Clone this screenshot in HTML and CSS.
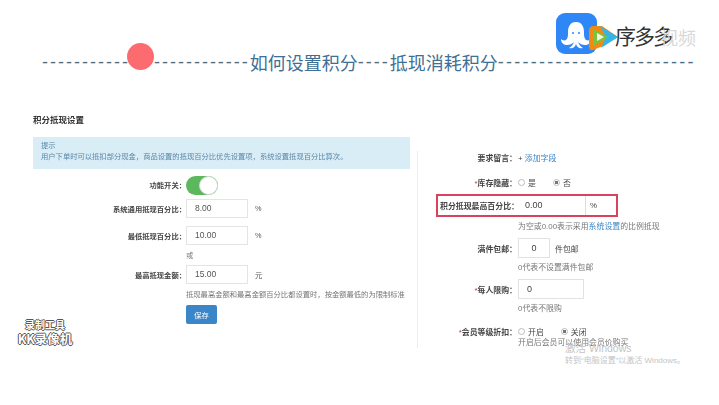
FILE: index.html
```html
<!DOCTYPE html>
<html lang="zh-CN">
<head>
<meta charset="utf-8">
<title>如何设置积分</title>
<link rel="stylesheet" href="styles.css">
</head>
<body>
<div class="slide">
  <h1 class="title"><span class="dash">--------------------------</span><span>如何设置积分</span><span class="dash">----</span><span>抵现消耗积分</span><span class="dash dash-end">------------------------</span></h1>
  <div class="dot"></div>

  <div class="logo">
    <svg class="logo-icon" width="66" height="44" viewBox="0 0 66 44">
      <rect x="0" y="0" width="41" height="41" rx="9" fill="#2f86f6"/>
      <path d="M20 9c-6 0-8 5-8 10 0 4 0 6-2 8-2 1-4 0-5-1 0 4 3 6 6 6 3 0 5-1 7-3-1 3-3 5-5 6 4 1 6-1 7-4 1 3 3 5 7 4-2-1-4-3-5-6 2 2 4 3 7 3 3 0 6-2 6-6-1 1-3 2-5 1-2-2-2-4-2-8 0-5-2-10-8-10z" fill="#fff"/>
      <circle cx="17" cy="20" r="1" fill="#2f86f6"/><circle cx="23" cy="20" r="1" fill="#2f86f6"/>
      <path d="M37 13h9l16 11-15 9-10 4c-2 1-4-1-4-3V17c0-2 2-4 4-4z" fill="#f08a12"/>
      <path d="M44 13l18 11-17 11 5-11z" fill="#32b6e8"/>
      <path d="M37 16l15 8-15 9z" fill="#7cc242"/>
      <path d="M41 20l7 4-7 4z" fill="#f5f7d8"/>
    </svg>
    <span class="logo-text">序多多</span>
    <span class="logo-ghost">视频</span>
  </div>

  <main class="panels">
    <section class="left">
      <h2 class="section-title">积分抵现设置</h2>
      <div class="tip">
        <div>提示</div>
        <div>用户下单时可以抵扣部分现金，商品设置的抵现百分比优先设置项，系统设置抵现百分比算次。</div>
      </div>
      <div class="form-left">
        <div class="row row-switch"><label class="lab">功能开关：</label><span class="switch"><i></i></span></div>
        <div class="row"><label class="lab">系统通用抵现百分比：</label><span class="inp">8.00</span><span class="unit">%</span></div>
        <div class="row"><label class="lab">最低抵现百分比：</label><span class="inp">10.00</span><span class="unit">%</span></div>
        <div class="row-plain"><span class="lab"></span><span class="note">或</span></div>
        <div class="row"><label class="lab">最高抵现金额：</label><span class="inp">15.00</span><span class="unit">元</span></div>
        <div class="row-plain"><span class="lab"></span><span class="note">抵现最高金额和最高金额百分比都设置时，按金额最低的为限制标准</span></div>
        <div class="row-btn"><span class="lab"></span><button class="save">保存</button></div>
      </div>
    </section>

    <section class="right">
      <div class="r-row r-first"><span class="r-lab">要求留言：</span><span>+ <a class="link">添加字段</a></span></div>
      <div class="r-row r-stock"><span class="r-lab"><b>*</b>库存隐藏：</span><span class="radio"></span><span class="opt">是</span><span class="radio on"></span><span>否</span></div>
      <div class="hl">
        <span class="hl-lab">积分抵现最高百分比：</span><span class="hl-val">0.00</span><span class="hl-unit">%</span>
      </div>
      <div class="r-note r-note-a">为空或0.00表示采用<a class="link">系统设置</a>的比例抵现</div>
      <div class="r-row r-free"><span class="r-lab">满件包邮：</span><span class="r-inp small">0</span><span>件包邮</span></div>
      <div class="r-note r-note-b">0代表不设置满件包邮</div>
      <div class="r-row r-limit"><span class="r-lab"><b>*</b>每人限购：</span><span class="r-inp wide">0</span></div>
      <div class="r-note r-note-c">0代表不限购</div>
      <div class="r-row r-vip"><span class="r-lab"><b>*</b>会员等级折扣：</span><span class="radio"></span><span class="opt">开启</span><span class="radio on"></span><span>关闭</span></div>
      <div class="r-note r-note-d">开启后会员可以使用会员价购买</div>
    </section>
  </main>

  <div class="kk"><div class="kk-top">录制工具</div><div class="kk-main">KK录像机</div></div>
  <div class="activate"><div class="act-top">激活 Windows</div><div>转到“电脑设置”以激活 Windows。</div></div>
</div>
</body>
</html>
```
FILE: styles.css
```css
* { box-sizing: border-box; }
html, body { margin: 0; padding: 0; background: #fff; }
body { font-family: "Liberation Sans", "Noto Sans CJK SC", sans-serif; color: #555; }
.slide { position: relative; width: 719px; height: 405px; overflow: hidden; background: #fff; padding-top: 50px; }

.title { margin: 0 0 0 42px; display: flex; height: 24px; align-items: center; font-family: "Noto Sans CJK SC", sans-serif; font-size: 18px; line-height: 24px; font-weight: 400; color: #3f6f94; white-space: nowrap; }
.dash { font-family: "Liberation Sans", sans-serif; letter-spacing: 2px; color: #4f6f82; }
.dash-end { letter-spacing: 2.25px; }
.dot { position: absolute; left: 127px; top: 43px; width: 27px; height: 27px; border-radius: 50%; background: #fb6b70; }

.logo { position: absolute; left: 556px; top: 13px; width: 150px; height: 48px; }
.logo-icon { position: absolute; left: 0; top: 0; }
.logo-text { position: absolute; left: 59px; top: 7px; font-family: "Noto Sans CJK SC", sans-serif; font-size: 21px; line-height: 30px; letter-spacing: -2px; color: #333; }
.logo-ghost { position: absolute; left: 104px; top: 12px; font-family: "Noto Sans CJK SC", sans-serif; font-size: 18px; line-height: 24px; color: #d8d8d8; }

.panels { display: flex; margin-top: 38px; font-size: 7.3px; filter: blur(0.4px); }
.left { width: 377px; margin-left: 33px; flex: none; }
.section-title { margin: 0; height: 25px; font-size: 8.5px; line-height: 13px; font-weight: 700; color: #333; padding-top: 1px; font-family: "Noto Sans CJK SC", sans-serif; }
.tip { height: 32px; background: #d9edf7; padding: 3px 8px; line-height: 11px; color: #5b87a6; white-space: nowrap; }
.form-left { padding-top: 5px; }
.lab { width: 153px; flex: none; text-align: right; color: #444; font-weight: 700; }
.row, .row-plain, .row-btn { display: flex; align-items: center; }
.row { height: 19px; margin-bottom: 8px; }
.row-switch { height: 22px; margin-bottom: 3px; }
.row-plain { height: 12px; white-space: nowrap; }
.row:nth-child(3) { margin-bottom: 4px; }
.row-plain + .row { margin-top: 4px; margin-bottom: 4px; }
.row-plain + .row + .row-plain { margin-bottom: 5px; }
.inp { width: 62px; height: 19px; border: 1px solid #e4e4e4; background: #fff; padding: 0 8px; line-height: 17px; margin-right: 7px; color: #555; font-size: 8.5px; }
.unit { color: #555; }
.note { color: #777; }
.switch { display: block; width: 32px; height: 19px; border-radius: 10px; background: #5cb85c; position: relative; }
.switch i { position: absolute; right: 0; top: 0; width: 19px; height: 19px; border-radius: 50%; background: #fff; border: 1px solid #d8d8d8; }
.save { width: 31px; height: 19px; padding: 0; border: 0; border-radius: 2px; background: #3b86c8; color: #fff; font: inherit; }

.right { position: relative; margin-left: 7px; width: 275px; height: 197px; margin-top: 39px; border-left: 1px solid #eee; font-size: 7.9px; color: #444; }
.r-row { display: flex; align-items: center; }
.r-lab { width: 100px; flex: none; text-align: right; font-weight: 700; color: #444; padding-right: 1px; }
.r-lab b { color: #c33; font-weight: 400; }
.link { color: #3b86c8; }
.r-first { margin-top: 0; height: 12px; }
.r-stock { margin-top: 13px; height: 12px; }
.radio { display: inline-block; width: 7px; height: 7px; border: 1px solid #bbb; border-radius: 50%; margin-right: 3px; }
.radio.on { background: radial-gradient(circle, #777 45%, #fff 50%); }
.opt { margin-right: 17px; }
.hl { display: flex; align-items: center; margin: 6px 0 0 18px; width: 182px; height: 23px; border: 2px solid #d8425c; background: #fff; }
.hl-lab { width: 82px; flex: none; font-weight: 700; padding-left: 2px; color: #444; white-space: nowrap; }
.hl-val { width: 66px; flex: none; font-size: 9px; padding-left: 5px; height: 19px; line-height: 19px; border-right: 1px solid #ddd; }
.hl-unit { padding-left: 4px; }
.r-note { margin-left: 100px; height: 12px; line-height: 12px; color: #777; white-space: nowrap; }
.r-note-a { margin-top: 4px; }
.r-free { margin-top: 5px; height: 20px; }
.r-inp { height: 20px; border: 1px solid #e2e2e2; line-height: 18px; display: block; margin-right: 5px; padding-left: 8px; font-size: 9px; }
.r-inp.small { width: 32px; text-align: center; padding-left: 0; }
.r-inp.wide { width: 66px; }
.r-note-b { margin-top: 4px; }
.r-limit { margin-top: 5px; height: 20px; }
.r-note-c { margin-top: 4px; }
.r-vip { margin-top: 10px; height: 12px; }
.r-note-d { margin-top: 0; }

.kk { position: absolute; left: 15px; top: 318px; width: 60px; display: flex; flex-direction: column; align-items: center; font-weight: 700; color: #fff; font-family: "Noto Sans CJK SC", sans-serif; text-shadow: -1px 0 #555, 1px 0 #555, 0 -1px #555, 0 1px #555; white-space: nowrap; }
.kk-top { font-size: 10px; line-height: 14px; }
.kk-main { font-size: 12.5px; line-height: 14px; }
.activate { position: absolute; left: 565px; top: 341px; font-size: 8px; line-height: 12px; color: #c4c4c4; white-space: nowrap; }
.act-top { font-size: 10.5px; line-height: 14px; }
```
